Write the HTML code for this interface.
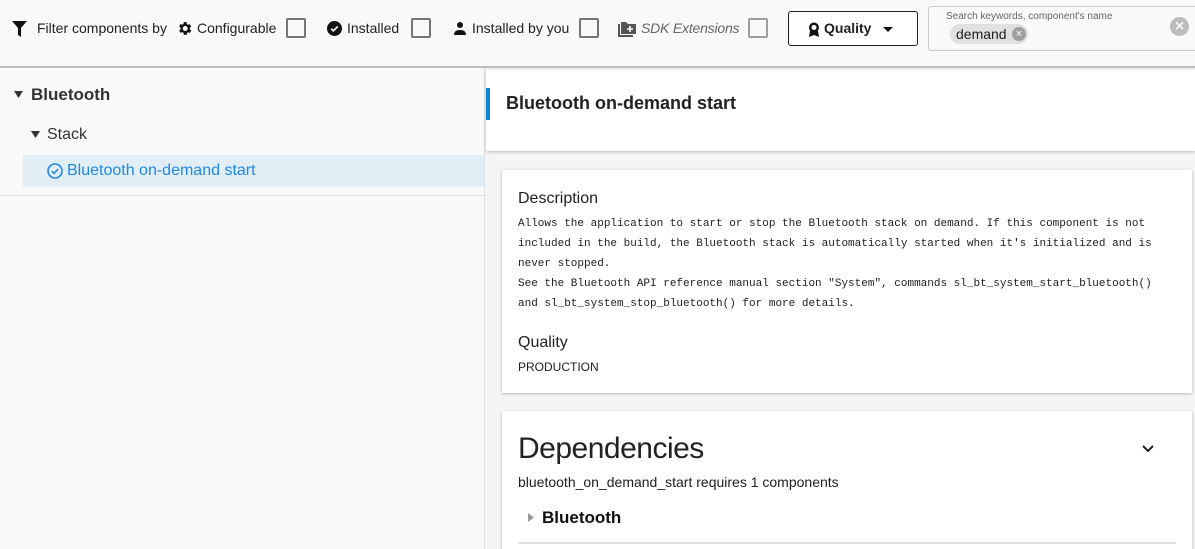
<!DOCTYPE html>
<html><head><meta charset="utf-8"><style>
*{box-sizing:border-box;margin:0;padding:0}
html,body{width:1195px;height:549px;overflow:hidden}
body{background:#f5f5f5;font-family:"Liberation Sans",Arial,sans-serif;color:#212121;position:relative}
.top{position:absolute;left:0;top:0;width:1195px;height:68px;background:#f9f9f9;border-bottom:2px solid #bdbdbd}
.t{position:absolute;font-size:14px;top:20px;color:#212121}
.cb{position:absolute;top:18px;width:20px;height:20px;border:2px solid #757575;border-radius:2px}
.left{position:absolute;left:0;top:68px;width:485px;height:481px;background:#f9f9f9;border-right:1px solid #e0e0e0}
.right{position:absolute;left:486px;top:68px;width:709px;height:481px;background:#f5f5f5}
.card{position:absolute;background:#fff;box-shadow:0 1px 3px rgba(0,0,0,.25)}
.mono{font-family:"Liberation Mono",monospace;font-size:11px;line-height:20px;color:#212121}
</style></head><body>
<div class="top">
 <svg style="position:absolute;left:12px;top:21px" width="15" height="16" viewBox="0 0 15 16"><path d="M0 0H15L9 7V16L6 14V7Z" fill="#111"/></svg>
 <div class="t" style="left:37px">Filter components by</div>
 <svg style="position:absolute;left:176px;top:20px" width="17" height="17" viewBox="0 0 24 24"><path fill="#111" d="M19.4 13a7.5 7.5 0 000-2l2.1-1.6-2-3.5-2.5 1a7 7 0 00-1.7-1L15 3h-4l-.4 2.7a7 7 0 00-1.7 1l-2.5-1-2 3.5L6.6 11a7.5 7.5 0 000 2l-2.1 1.6 2 3.5 2.5-1a7 7 0 001.7 1L11 21h4l.4-2.7a7 7 0 001.7-1l2.5 1 2-3.5zM13 15.5a3.5 3.5 0 110-7 3.5 3.5 0 010 7z"/></svg>
 <div class="t" style="left:197px">Configurable</div>
 <div class="cb" style="left:286px"></div>
 <svg style="position:absolute;left:327px;top:21px" width="15" height="15" viewBox="0 0 16 16"><circle cx="8" cy="8" r="8" fill="#111"/><path d="M4.5 8.2l2.3 2.3 4.7-4.7" stroke="#fff" stroke-width="1.8" fill="none"/></svg>
 <div class="t" style="left:347px">Installed</div>
 <div class="cb" style="left:411px"></div>
 <svg style="position:absolute;left:453px;top:21px" width="14" height="14" viewBox="0 0 14 14"><circle cx="7" cy="4" r="3" fill="#111"/><path d="M1 14c0-4 3-5 6-5s6 1 6 5z" fill="#111"/></svg>
 <div class="t" style="left:472px">Installed by you</div>
 <div class="cb" style="left:579px"></div>
 <svg style="position:absolute;left:618px;top:20px" width="19" height="17" viewBox="0 0 19 17"><path d="M0 4v13h15v-2H2V4z" fill="#555"/><path d="M3 2h5l2 2h8v10H3z" fill="#555"/><path d="M12 6v6M9 9h6" stroke="#fff" stroke-width="1.6"/></svg>
 <div class="t" style="left:641px;font-style:italic;color:#666;letter-spacing:-0.2px">SDK Extensions</div>
 <div class="cb" style="left:748px;border-color:#9e9e9e"></div>
 <div style="position:absolute;left:788px;top:11px;width:130px;height:35px;border:1px solid #212121;border-radius:3px;background:#fff">
  <svg style="position:absolute;left:19px;top:10px" width="12" height="15" viewBox="0 0 12 15"><circle cx="6" cy="5.5" r="5" fill="#111"/><circle cx="6" cy="5.5" r="2.5" fill="#fff"/><path d="M2 9l-1 6 5-2 5 2-1-6z" fill="#111"/></svg>
  <span style="position:absolute;left:35px;top:8px;font-size:14px;font-weight:bold">Quality</span>
  <svg style="position:absolute;left:94px;top:15px" width="10" height="5"><path d="M0 0h10L5 5z" fill="#111"/></svg>
 </div>
 <div style="position:absolute;left:928px;top:6px;width:270px;height:45px;border:1px solid #ccc;border-radius:3px;background:#f9f9f9">
  <div style="position:absolute;left:17px;top:4px;font-size:10px;color:#666">Search keywords, component's name</div>
  <div style="position:absolute;left:21px;top:17px;height:20px;width:78px;border-radius:10px;background:#e0e0e0;font-size:14px;padding:2px 0 0 6px">demand<span style="position:absolute;left:62px;top:3px;width:14px;height:14px;border-radius:7px;background:#9e9e9e;color:#e0e0e0;font-size:11px;line-height:14px;text-align:center;font-weight:bold">×</span></div>
  <div style="position:absolute;left:241px;top:10px;width:19px;height:19px;border-radius:10px;background:#bdbdbd;color:#f9f9f9;font-size:16px;line-height:19px;text-align:center;font-weight:bold">×</div>
 </div>
</div>
<div class="left">
 <svg style="position:absolute;left:14px;top:23px" width="9" height="7"><path d="M0 0h9L4.5 7z" fill="#333"/></svg>
 <div style="position:absolute;left:31px;top:17px;font-size:17px;font-weight:bold;color:#333">Bluetooth</div>
 <svg style="position:absolute;left:31px;top:63px" width="9" height="7"><path d="M0 0h9L4.5 7z" fill="#333"/></svg>
 <div style="position:absolute;left:47px;top:58px;font-size:16px;color:#333">Stack</div>
 <div style="position:absolute;left:23px;top:87px;width:461px;height:32px;background:#e1eef6"></div>
 <svg style="position:absolute;left:47px;top:95px" width="16" height="16" viewBox="0 0 16 16"><circle cx="8" cy="8" r="7" stroke="#1e88e5" stroke-width="1.6" fill="none"/><path d="M4.8 8.2l2.2 2.2 4.2-4.4" stroke="#1e88e5" stroke-width="1.6" fill="none"/></svg>
 <div style="position:absolute;left:67px;top:94px;font-size:16px;color:#1e88e5">Bluetooth on-demand start</div>
 <div style="position:absolute;left:0;top:127px;width:484px;height:1px;background:#ddd"></div>
</div>
<div class="right">
 <div class="card" style="left:0;top:2px;width:709px;height:81px">
  <div style="position:absolute;left:0;top:18px;width:4px;height:32px;background:#0a84d6"></div>
  <div style="position:absolute;left:20px;top:23px;font-size:18px;font-weight:bold;color:#222">Bluetooth on-demand start</div>
 </div>
 <div class="card" style="left:16px;top:102px;width:690px;height:223px">
  <div style="position:absolute;left:16px;top:20px;font-size:16px">Description</div>
  <div class="mono" style="position:absolute;left:16px;top:44px;width:660px">Allows the application to start or stop the Bluetooth stack on demand. If this component is not<br>included in the build, the Bluetooth stack is automatically started when it's initialized and is<br>never stopped.<br>See the Bluetooth API reference manual section "System", commands sl_bt_system_start_bluetooth()<br>and sl_bt_system_stop_bluetooth() for more details.</div>
  <div style="position:absolute;left:16px;top:164px;font-size:16px">Quality</div>
  <div style="position:absolute;left:16px;top:190px;font-size:12px">PRODUCTION</div>
 </div>
 <div class="card" style="left:16px;top:343px;width:690px;height:150px">
  <div style="position:absolute;left:16px;top:21px;font-size:30px;color:#222;letter-spacing:-0.5px">Dependencies</div>
  <svg style="position:absolute;left:640px;top:34px" width="12" height="8"><path d="M1 1l5 5 5-5" stroke="#222" stroke-width="2" fill="none"/></svg>
  <div style="position:absolute;left:16px;top:63px;font-size:14px">bluetooth_on_demand_start requires 1 components</div>
  <svg style="position:absolute;left:26px;top:102px" width="6" height="9"><path d="M0 0v9l6-4.5z" fill="#999"/></svg>
  <div style="position:absolute;left:40px;top:97px;font-size:17px;font-weight:bold;color:#111">Bluetooth</div>
  <div style="position:absolute;left:16px;top:131px;width:658px;height:2px;background:#e0e0e0"></div>
 </div>
</div>
</body></html>
